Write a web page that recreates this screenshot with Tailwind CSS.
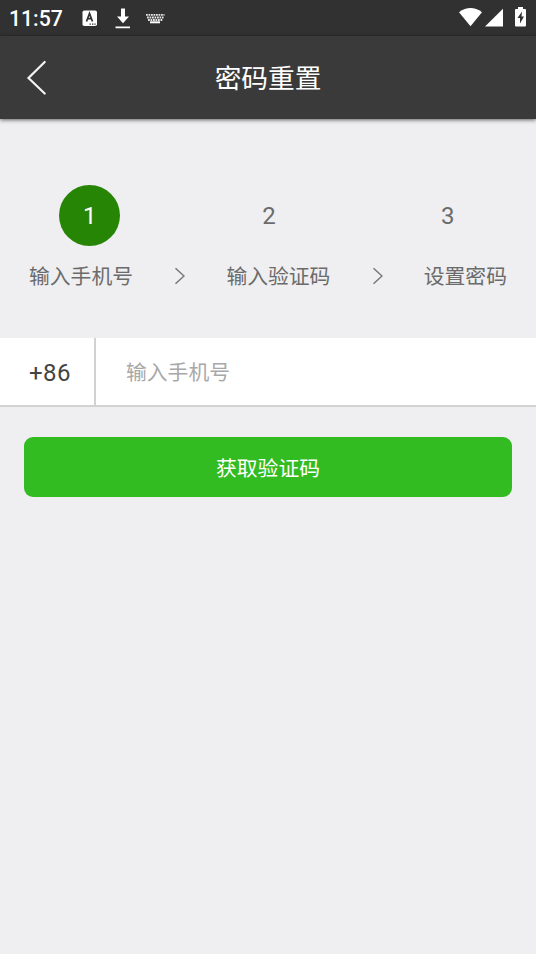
<!DOCTYPE html>
<html lang="zh-CN">
<head>
<meta charset="utf-8">
<title>密码重置</title>
<script src="https://cdn.jsdelivr.net/npm/@tailwindcss/browser@4"></script>
</head>
<body class="flex h-[954px] w-[536px] flex-col overflow-hidden bg-[#efeff1] font-[Roboto,'Noto_Sans_CJK_SC',sans-serif] text-[#6b6b6b]">
<div class="flex h-9 shrink-0 items-center bg-[#313131] pl-[9px] text-white">
  <span class="w-[73px] pt-0.5 text-[21.2px] leading-none font-medium">11:57</span>
  <svg class="h-9 w-[90px]" viewBox="82 0 90 36" fill="#fff">
    <rect x="82.500" y="10.500" width="14.500" height="15.500" rx="1.800"/>
    <path d="M86.500 21.500l3-8 3 8M87.700 18.700h3.600" fill="none" stroke="#313131" stroke-width="1.700"/>
    <path d="M89.500 23.500h1.300v1.200h-1.300zM92 23.500h1.300v1.200H92zM94.300 23.500h1.300v1.200h-1.300z" fill="#313131"/>
    <path d="M121 8.500h4v8h4l-6 6.800-6-6.800h4zM115.500 26.500h14.500v1.800h-14.500z"/>
    <path d="M146 14.800h18.500M147 17.500h16.500M148 20h14.500" stroke="#e4e4e4" stroke-width="1.800" stroke-dasharray="1.800 .7" fill="none"/>
    <path d="M150 21.300h10v2h-10z"/>
  </svg>
  <svg class="ml-auto h-9 w-[80px]" viewBox="456 0 80 36" fill="#fff">
    <path d="M459 12.200Q470.500 4 482 12.200L470.500 26.200z"/>
    <path d="M485 26.500L503 8.700v17.800z"/>
    <path d="M518 7h5v2h2q1 0 1 1v15.500q0 1-1 1h-9q-1 0-1-1V10q0-1 1-1h2z"/>
    <path d="M522 11.500l-4.500 6.500h2.500v5.500l4-7h-2.500z" fill="#313131"/>
  </svg>
</div>
<header class="relative z-10 grid h-[83px] shrink-0 grid-cols-[80px_1fr_80px] items-center bg-[#3a3a3a] text-white shadow-[0_1px_4px_rgba(0,0,0,0.6)]">
  <svg class="ml-6 size-[40px]" viewBox="0 0 40 40" fill="none" stroke="#f4f4f4" stroke-width="2.200" stroke-linecap="round"><path d="M20.700 4L4.500 20l16.200 15.500"/></svg>
  <h1 class="pt-[3px] text-center text-[26.700px] leading-none">密码重置</h1>
</header>
<main>
  <section class="h-[219px] pt-[66px]">
    <div class="grid grid-cols-3 place-items-center text-[24px] leading-none">
      <span class="flex size-[61px] items-center justify-center rounded-full bg-[#278506] pt-px pl-px text-white">1</span>
      <span class="pt-px pl-[2px]">2</span>
      <span class="pt-px pl-[2px]">3</span>
    </div>
    <div class="mt-4 flex items-center justify-between px-[29px] text-[20.800px] leading-[30px]">
      <span>输入手机号</span>
      <svg class="-mt-[3px] h-[18px] w-[11px]" viewBox="0 0 11 18" fill="none" stroke="#777" stroke-width="1.500"><path d="M1.500 1.200L10 9l-8.500 7.800"/></svg>
      <span>输入验证码</span>
      <svg class="-mt-[3px] h-[18px] w-[11px]" viewBox="0 0 11 18" fill="none" stroke="#777" stroke-width="1.500"><path d="M1.500 1.200L10 9l-8.500 7.800"/></svg>
      <span>设置密码</span>
    </div>
  </section>
  <div class="flex h-[69px] border-b-2 border-[#d2d2d3] bg-white">
    <div class="flex w-[96px] items-center border-r-2 border-[#d2d2d3] pl-[29px] pt-0.5 text-[24px] leading-none tracking-[0.4px] text-[#444]">+86</div>
    <div class="flex items-center pl-[30px] pt-1 text-[20.800px] leading-none text-[#a8a8a8]">输入手机号</div>
  </div>
  <button class="mx-6 mt-[30px] flex h-[60px] w-[488px] items-center justify-center rounded-[9px] bg-[#33bb22] pt-1 text-[20.800px] leading-none text-white">获取验证码</button>
</main>
</body>
</html>
